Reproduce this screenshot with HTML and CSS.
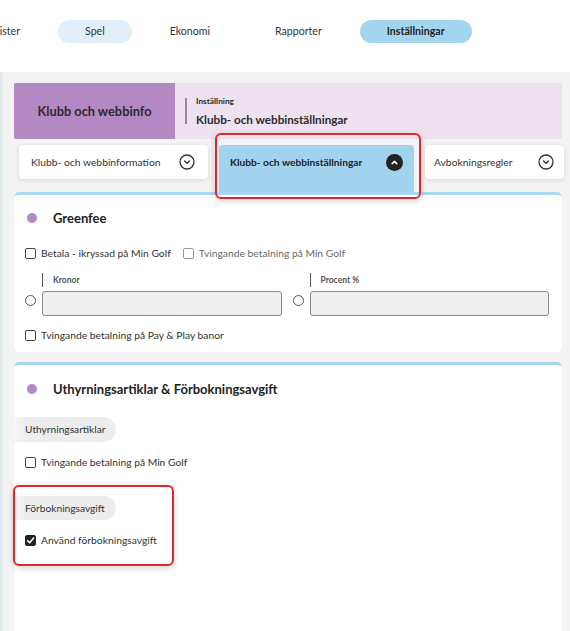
FILE: index.html
```html
<!DOCTYPE html>
<html lang="sv">
<head>
  <meta charset="UTF-8">
  <title>Klubb och webbinfo - Inställningar</title>
  <link rel="stylesheet" href="styles.css">
</head>
<body>

<nav class="topnav">
  <ul class="menu">
    <li class="menu-item menu-cut">Medlemsregister</li>
    <li class="menu-item menu-light">Spel</li>
    <li class="menu-item">Ekonomi</li>
    <li class="menu-item">Rapporter</li>
    <li class="menu-item menu-active">Inställningar</li>
  </ul>
</nav>

<div class="workspace">
  <div class="content">

    <div class="page-head">
      <div class="head-title">Klubb och webbinfo</div>
      <div class="head-crumb">
        <span class="crumb-small">Inställning</span>
        <span class="crumb-main">Klubb- och webbinställningar</span>
      </div>
    </div>

    <div class="tabs">
      <div class="tab">
        <span>Klubb- och webbinformation</span>
        <svg class="tab-icon" width="16" height="16" viewBox="0 0 16 16">
          <circle cx="8" cy="8" r="7" fill="none" stroke="#333" stroke-width="1.3"/>
          <path d="M5.6 7 L8 9.3 L10.4 7" fill="none" stroke="#333" stroke-width="1.4" stroke-linecap="round" stroke-linejoin="round"/>
        </svg>
      </div>
      <div class="tab tab-open marked">
        <span>Klubb- och webbinställningar</span>
        <svg class="tab-icon" width="17" height="17" viewBox="0 0 17 17">
          <circle cx="8.5" cy="8.5" r="8.5" fill="#222"/>
          <path d="M6.2 9.6 L8.5 7.4 L10.8 9.6" fill="none" stroke="#fff" stroke-width="1.6" stroke-linecap="round" stroke-linejoin="round"/>
        </svg>
      </div>
      <div class="tab tab-last">
        <span>Avbokningsregler</span>
        <svg class="tab-icon" width="16" height="16" viewBox="0 0 16 16">
          <circle cx="8" cy="8" r="7" fill="none" stroke="#333" stroke-width="1.3"/>
          <path d="M5.6 7 L8 9.3 L10.4 7" fill="none" stroke="#333" stroke-width="1.4" stroke-linecap="round" stroke-linejoin="round"/>
        </svg>
      </div>
    </div>

    <section class="panel">
      <h3 class="panel-title"><span class="dot"></span>Greenfee</h3>

      <div class="check-row">
        <label class="check"><span class="box"></span>Betala - ikryssad på Min Golf</label>
        <label class="check check-off"><span class="box"></span>Tvingande betalning på Min Golf</label>
      </div>

      <div class="fields">
        <div class="field-col">
          <div class="field-label">Kronor</div>
          <div class="field-row">
            <span class="radio"></span>
            <div class="field-input"></div>
          </div>
        </div>
        <div class="field-col">
          <div class="field-label">Procent %</div>
          <div class="field-row">
            <span class="radio"></span>
            <div class="field-input"></div>
          </div>
        </div>
      </div>

      <div class="check-row check-row-last">
        <label class="check"><span class="box"></span>Tvingande betalning på Pay &amp; Play banor</label>
      </div>
    </section>

    <section class="panel panel-tall">
      <h3 class="panel-title"><span class="dot"></span>Uthyrningsartiklar &amp; Förbokningsavgift</h3>

      <div class="chip">Uthyrningsartiklar</div>
      <div class="check-row">
        <label class="check"><span class="box"></span>Tvingande betalning på Min Golf</label>
      </div>

      <div class="group marked-group">
        <div class="chip">Förbokningsavgift</div>
        <div class="check-row">
          <label class="check">
            <span class="box box-on">
              <svg width="9" height="9" viewBox="0 0 9 9"><path d="M1.6 4.7 L3.6 6.7 L7.6 2" fill="none" stroke="#fff" stroke-width="1.6" stroke-linecap="round" stroke-linejoin="round"/></svg>
            </span>Använd förbokningsavgift
          </label>
        </div>
      </div>
    </section>

  </div>
</div>

</body>
</html>
```

FILE: styles.css
```css
body {
  font-family: Lato, 'Noto Sans', sans-serif;
  margin: 0;
  padding: 0;
  background-color: #fff;
  color: #2b2b2b;
  height: 631px;
  overflow: hidden;
}

/* top menu */
.topnav {
  height: 72px;
  background-color: #fff;
  overflow: hidden;
}

.menu {
  list-style: none;
  margin: 0;
  padding: 20px 0 0 0;
  display: flex;
  gap: 11px;
}

.menu-item {
  height: 23px;
  line-height: 23px;
  padding: 0 27px;
  border-radius: 12px;
  font-size: 10.6px;
  color: #333;
  white-space: nowrap;
}

.menu-cut {
  width: 20px;
  padding-left: 0;
  display: flex;
  justify-content: flex-end;
}

.menu-light {
  background-color: #e1eff8;
}

.menu-active {
  background-color: #a3d5ef;
  font-weight: bold;
  color: #222;
}

/* grey working area */
.workspace {
  background-color: #f3f3f3;
  border-left: 3px solid #e3eaee;
  height: 559px;
  overflow: hidden;
}

.content {
  width: 548px;
  padding: 11px 0 0 11px;
}

.page-head {
  display: flex;
  height: 56px;
  background-color: #efe2f0;
}

.head-title {
  width: 161px;
  background-color: #b488c3;
  border-radius: 2px 0 0 2px;
  display: flex;
  align-items: center;
  justify-content: center;
  font-size: 12.8px;
  font-weight: bold;
  color: #2e2a30;
}

.head-crumb {
  margin: 15px 0 15px 10px;
  padding-left: 9px;
  border-left: 2px solid #a47fb4;
  display: flex;
  flex-direction: column;
  justify-content: space-between;
}

.crumb-small {
  font-size: 8.3px;
  font-weight: bold;
  line-height: 10px;
  margin-top: -2px;
}

.crumb-main {
  font-size: 11.7px;
  font-weight: bold;
  line-height: 14px;
  margin-bottom: -2px;
}

/* tabs */
.tabs {
  display: flex;
  align-items: flex-start;
  gap: 11px;
  margin: 6px -3px 0 5px;
}

.tab {
  height: 34px;
  padding: 0 13px 0 12px;
  background-color: #fff;
  border-radius: 4px;
  box-shadow: 0px 1px 4px rgba(0, 0, 0, 0.12);
  display: flex;
  align-items: center;
  justify-content: space-between;
  font-size: 10.3px;
  color: #333;
  white-space: nowrap;
  box-sizing: border-box;
  width: 189px;
}

.tab-open {
  width: 195px;
  height: 47px;
  padding: 0 11px 13px 11px;
  background-color: #a1d3ee;
  border-radius: 4px 4px 0 0;
  box-shadow: none;
  font-weight: bold;
  font-size: 10.2px;
  color: #222;
}

.tab-last {
  width: 139px;
  padding: 0 10px 0 9px;
}

.tab-icon {
  flex-shrink: 0;
}

/* red marking around highlighted items */
.marked, .marked-group {
  position: relative;
}

.marked::after, .marked-group::after {
  content: "";
  position: absolute;
  border: 2px solid #e3262b;
  border-radius: 6px;
  box-shadow: 0px 2px 6px rgba(0, 0, 0, 0.18);
}

.marked::after {
  top: -12px;
  left: -4px;
  right: -7px;
  bottom: -7px;
}

.marked-group::after {
  top: -11px;
  left: -12px;
  width: 157px;
  bottom: -19px;
}

/* panels */
.panel {
  background-color: #fff;
  border-top: 3px solid #a9d7ef;
  border-radius: 5px;
  padding: 15px 13px 10px 11px;
}

.panel + .panel {
  margin-top: 10px;
}

.panel-tall {
  height: 240px;
  padding-top: 16px;
  border-radius: 5px 5px 0 0;
}

.panel-title {
  margin: 0;
  font-size: 13px;
  line-height: 16px;
  font-weight: bold;
  color: #222;
  display: flex;
  align-items: center;
}

.dot {
  width: 10px;
  height: 10px;
  border-radius: 50%;
  background-color: #b48ac6;
  margin: 0 16px 0 2px;
}

.check-row {
  display: flex;
  gap: 12px;
  margin-top: 20px;
}

.check {
  display: flex;
  align-items: center;
  height: 14px;
  font-size: 10.3px;
  color: #333;
  white-space: nowrap;
}

.check-off {
  color: #6a6a6a;
}

.box {
  width: 11px;
  height: 11px;
  border: 1.3px solid #444;
  border-radius: 2px;
  box-sizing: border-box;
  margin-right: 5px;
  display: flex;
  align-items: center;
  justify-content: center;
}

.check-off .box {
  border-color: #9a9a9a;
}

.box-on {
  background-color: #222;
  border-color: #222;
}

.fields {
  display: grid;
  grid-template-columns: 1fr 1fr;
  gap: 11px;
  margin-top: 13px;
}

.field-label {
  margin-left: 17px;
  height: 14px;
  border-left: 1px solid #555;
  padding-left: 10px;
  font-size: 8.5px;
  font-weight: bold;
  color: #555;
  line-height: 14px;
}

.field-row {
  display: flex;
  gap: 6px;
  margin-top: 4px;
}

.radio {
  width: 11px;
  height: 11px;
  border: 1.2px solid #555;
  border-radius: 50%;
  box-sizing: border-box;
  margin-top: 4px;
  flex-shrink: 0;
}

.field-input {
  flex: 1;
  height: 25px;
  box-sizing: border-box;
  border: 1px solid #8a8a8a;
  border-radius: 3px;
  background-color: #efefef;
}

.check-row-last {
  margin-top: 12px;
}

.chip {
  display: inline-block;
  margin: 20px 0 0 -11px;
  padding: 0 11px;
  height: 25px;
  line-height: 25px;
  font-size: 10.2px;
  color: #333;
  border-radius: 0 13px 13px 0;
  background: linear-gradient(to right, #f6f6f6, #ededed 12px);
}

.panel-tall .check-row {
  margin-top: 13px;
}

.group {
  margin-top: 27px;
}

.group .chip {
  margin-top: 0;
  height: 24px;
  line-height: 24px;
}
```
